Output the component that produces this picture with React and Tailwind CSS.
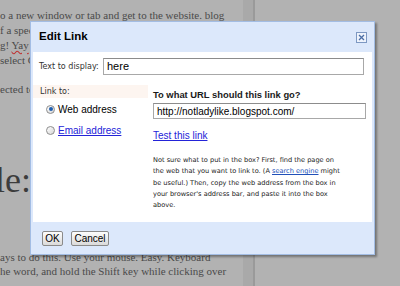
const serif = { fontFamily: '"Liberation Serif", "Times New Roman", serif' };
const sans = { fontFamily: '"Liberation Sans", Arial, sans-serif' };
const small = { fontFamily: '"DejaVu Sans", Verdana, sans-serif' };

const Radio = ({ checked }) => (
	<div className="w-[9px] h-[9px] rounded-full border border-[#8d8d8d] bg-gradient-to-br from-[#ffffff] to-[#d6d6d6] flex items-center justify-center">
		{checked && <div className="w-[4px] h-[4px] rounded-full bg-[#1f5fb0]" />}
	</div>
);

const Button = ({ children, w }) => (
	<button
		type="button"
		className={`${w} h-[15px] rounded-[2px] border border-[#8a8a8a] bg-gradient-to-b from-[#fdfdfd] to-[#dadada] text-[10px] leading-none text-black`}
		style={sans}
	>
		{children}
	</button>
);

export default function App() {
	return (
		<main className="relative w-[400px] h-[286px] overflow-hidden bg-[#b2b2b2]">
			{/* page behind the dialog */}
			<div className="flex h-full">
				<div className="w-[243px] text-[11px] leading-[15px] text-[#4a4a4a] whitespace-nowrap" style={serif}>
					<div className="pt-[8px]">o a new window or tab and get to the website. blog</div>
					<div className="w-[30px] overflow-hidden">
						<div>f a spec</div>
						<div>
							g! <span className="underline decoration-[#c03030] decoration-wavy">Yay</span>
						</div>
						<div>select C</div>
						<div className="mt-[14px]">ected to</div>
						<div className="mt-[63px] ml-[-5px] text-[36px] leading-[40px] text-[#3c3c3c]">le:</div>
					</div>
					<div className="mt-[50px] leading-[14px]">ays to do this. Use your mouse. Easy. Keyboard</div>
					<div className="leading-[14px]">he word, and hold the Shift key while clicking over</div>
				</div>
				<div className="w-[10px] h-full bg-[#a9a9a9]" />
				<div className="w-[2px] h-full bg-[#9a9a9a]" />
				<div className="flex-1" />
			</div>

			{/* Edit Link dialog */}
			<div className="absolute left-[30px] top-[21px] w-[345px] h-[234px] border border-[#a3bde4] bg-[#dce8fb] px-[2px] pb-[2px] flex flex-col shadow-[2px_2px_2px_rgba(0,0,0,0.35)]">
				<div className="h-[30px] flex items-center justify-between pl-[6px] pr-[5px]">
					<span className="text-[11.5px] font-bold text-black" style={sans}>
						Edit Link
					</span>
					<div className="w-[11px] h-[11px] border border-[#7d98c2] bg-[#eef3fc] flex items-center justify-center">
						<svg width="7" height="7" viewBox="0 0 7 7">
							<path d="M1 1L6 6M6 1L1 6" stroke="#4b6ea6" strokeWidth="1.3" />
						</svg>
					</div>
				</div>

				<div className="flex-1 bg-white">
					<div className="flex items-center mt-[6px] pl-[6px]">
						<span className="w-[64px] text-[8px] text-[#333]" style={small}>
							Text to display:
						</span>
						<div className="w-[261px] h-[17px] border border-[#a8a8a8] border-t-[#8c8c8c] flex items-center pl-[3px] text-[11px] text-black" style={sans}>
							here
						</div>
					</div>

					<div className="flex mt-[10px]">
						<div className="w-[115px]">
							<div className="h-[13px] bg-[#fdf5f0] pl-[7px] text-[8px] leading-[13px] text-[#333]" style={small}>
								Link to:
							</div>
							<div className="flex items-center h-[16px] mt-[3px] pl-[13px] gap-[3px]">
								<Radio checked />
								<span className="text-[10px] text-black" style={sans}>
									Web address
								</span>
							</div>
							<div className="flex items-center h-[16px] mt-[5px] pl-[13px] gap-[3px]">
								<Radio />
								<span className="text-[10px] text-[#2323d8] underline" style={sans}>
									Email address
								</span>
							</div>
						</div>

						<div className="ml-[5px] w-[213px]">
							<div className="mt-[4px] text-[9.4px] leading-[12px] font-bold text-[#1a1a1a]" style={sans}>
								To what URL should this link go?
							</div>
							<div className="mt-[2px] h-[16px] border border-[#a8a8a8] border-t-[#8c8c8c] flex items-center pl-[3px] text-[10px] text-black" style={sans}>
								http://notladylike.blogspot.com/
							</div>
							<div className="mt-[11px] text-[10px] leading-[12px] text-[#2323d8] underline" style={sans}>
								Test this link
							</div>
							<p className="mt-[13px] text-[6.6px] leading-[11.3px] text-[#222] whitespace-nowrap" style={small}>
								Not sure what to put in the box? First, find the page on
								<br />
								the web that you want to link to. (A{' '}
								<span className="text-[#2050b8] underline">search engine</span> might
								<br />
								be useful.) Then, copy the web address from the box in
								<br />
								your browser's address bar, and paste it into the box
								<br />
								above.
							</p>
						</div>
					</div>
				</div>

				<div className="h-[30px] flex items-center gap-[8px] pl-[9px] pt-[3px]">
					<Button w="w-[21px]">OK</Button>
					<Button w="w-[38px]">Cancel</Button>
				</div>
			</div>
		</main>
	);
}
